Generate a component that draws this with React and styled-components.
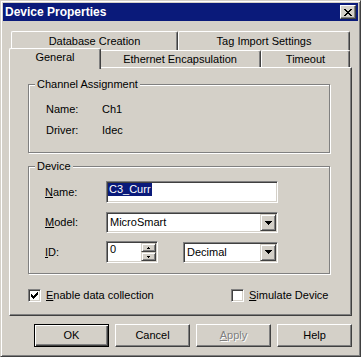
import React from 'react';
import styled, { createGlobalStyle, css } from 'styled-components';

const FACE = '#d4d0c8';
const SHADOW = '#808080';
const DARK = '#404040';
const LIGHT = '#ffffff';
const NAVY = '#0a1a7a';

const GlobalStyle = createGlobalStyle`
  html, body {
    margin: 0;
    padding: 0;
    background: ${FACE};
  }
  body {
    font-family: "Liberation Sans", Arial, sans-serif;
    font-size: 11px;
    color: #000;
  }
  * {
    box-sizing: border-box;
  }
`;

const sunken = css`
  background: ${LIGHT};
  border: 1px solid;
  border-color: ${SHADOW} ${LIGHT} ${LIGHT} ${SHADOW};
  box-shadow: inset 1px 1px 0 ${DARK}, inset -1px -1px 0 ${FACE};
`;

const raisedSoft = css`
  background: ${FACE};
  border: 1px solid;
  border-color: ${FACE} ${DARK} ${DARK} ${FACE};
  box-shadow: inset 1px 1px 0 ${LIGHT}, inset -1px -1px 0 ${SHADOW};
`;

const Window = styled.div`
  width: 361px;
  height: 357px;
  padding: 2px;
  display: flex;
  flex-direction: column;
  background: ${FACE};
  border: 1px solid;
  border-color: ${FACE} ${DARK} ${DARK} ${FACE};
  box-shadow: inset 1px 1px 0 ${LIGHT}, inset -1px -1px 0 ${SHADOW};
`;

const TitleBar = styled.div`
  height: 18px;
  display: flex;
  align-items: center;
  padding: 0 2px 0 2px;
  background: ${NAVY};
`;

const Title = styled.div`
  flex: 1;
  color: ${LIGHT};
  font-weight: bold;
  font-size: 12px;
  line-height: 14px;
`;

const CloseButton = styled.div`
  width: 16px;
  height: 14px;
  display: flex;
  align-items: center;
  justify-content: center;
  ${raisedSoft};
  border-color: ${LIGHT} ${DARK} ${DARK} ${LIGHT};
  box-shadow: inset -1px -1px 0 ${SHADOW};
`;

const Body = styled.div`
  flex: 1;
  display: flex;
  flex-direction: column;
  padding: 8px 6px 0 6px;
`;

const TabRow = styled.div`
  height: 19px;
  display: flex;
  padding: 0 2px;
`;

const Tab = styled.div`
  position: relative;
  z-index: ${(p) => (p.$active ? 2 : 1)};
  flex: none;
  width: ${(p) => p.$w}px;
  height: ${(p) => (p.$active ? 21 : p.$front ? 17 : 19)}px;
  margin: ${(p) => (p.$active ? '0 -2px' : '2px 0 0')};
  padding-bottom: ${(p) => (p.$active ? 3 : 0)}px;
  display: flex;
  align-items: center;
  justify-content: center;
  line-height: 13px;
  white-space: nowrap;
  background: ${FACE};
  border-top: 1px solid ${LIGHT};
  border-left: 1px solid ${LIGHT};
  border-right: 1px solid ${DARK};
  border-radius: 2px 2px 0 0;
  box-shadow: inset -1px 0 0 ${SHADOW};
`;

const Panel = styled.div`
  height: 249px;
  display: flex;
  flex-direction: column;
  padding: 10px 0 0 18px;
  border: 1px solid;
  border-color: ${LIGHT} ${DARK} ${DARK} ${LIGHT};
  box-shadow: inset -1px -1px 0 ${SHADOW};
`;

const GroupBox = styled.fieldset`
  width: 302px;
  margin: ${(p) => p.$gap || 0}px 0 0 0;
  padding: 0;
  min-inline-size: 0;
  border: 1px solid ${SHADOW};
  box-shadow: 1px 1px 0 ${LIGHT}, inset 1px 1px 0 ${LIGHT};
`;

const Legend = styled.legend`
  margin-left: 6px;
  padding: 0 2px;
  line-height: 13px;
  background: ${FACE};
`;

const GroupBody = styled.div`
  display: flex;
  flex-direction: column;
  gap: ${(p) => p.$gap}px;
  padding: ${(p) => p.$pad};
`;

const InfoRow = styled.div`
  display: flex;
  line-height: 13px;
`;

const InfoLabel = styled.div`
  width: 56px;
`;

const FieldRow = styled.div`
  display: flex;
  align-items: center;
  margin-top: ${(p) => p.$mt || 0}px;
`;

const FieldLabel = styled.div`
  width: 61px;
  line-height: 13px;
`;

const Key = styled.span`
  text-decoration: underline;
  text-underline-offset: 1px;
`;

const EditBox = styled.div`
  width: ${(p) => p.$w}px;
  height: 22px;
  padding: 1px 1px 1px 1px;
  line-height: 13px;
  display: flex;
  ${sunken};
`;

const Selected = styled.span`
  align-self: flex-start;
  padding: 0 1px;
  background: ${NAVY};
  color: ${LIGHT};
  white-space: pre;
`;

const EditText = styled.span`
  flex: 1;
  padding-left: 2px;
`;

const Combo = styled.div`
  width: ${(p) => p.$w}px;
  height: 21px;
  margin-left: ${(p) => p.$ml || 0}px;
  padding: 1px;
  display: flex;
  align-items: center;
  ${sunken};
`;

const ComboText = styled.span`
  flex: 1;
  padding-left: 2px;
  line-height: 13px;
`;

const DropButton = styled.div`
  width: 16px;
  align-self: stretch;
  display: flex;
  align-items: center;
  justify-content: center;
  ${raisedSoft};
`;

const SpinColumn = styled.div`
  width: 15px;
  display: flex;
  flex-direction: column;
`;

const SpinButton = styled.div`
  flex: 1;
  display: flex;
  align-items: center;
  justify-content: center;
  ${raisedSoft};
`;

const CheckRow = styled.div`
  display: grid;
  grid-template-columns: 203px auto;
  margin-top: 15px;
`;

const CheckItem = styled.label`
  display: flex;
  align-items: center;
  gap: 5px;
  line-height: 13px;
`;

const CheckBox = styled.span`
  width: 13px;
  height: 13px;
  padding: 1px;
  display: flex;
  ${sunken};
`;

const ButtonRow = styled.div`
  display: flex;
  justify-content: flex-end;
  gap: 6px;
  margin-top: 8px;
`;

const Button = styled.div`
  width: 75px;
  height: 23px;
  display: flex;
  align-items: center;
  justify-content: center;
  line-height: 13px;
  background: ${FACE};
  border: 1px solid;
  border-color: ${LIGHT} ${DARK} ${DARK} ${LIGHT};
  box-shadow: inset -1px -1px 0 ${SHADOW};
  color: ${(p) => (p.$disabled ? SHADOW : '#000')};
  text-shadow: ${(p) => (p.$disabled ? `1px 1px 0 ${LIGHT}` : 'none')};
  ${(p) =>
    p.$default &&
    css`
      border-color: #000;
      box-shadow: inset 1px 1px 0 ${LIGHT}, inset -1px -1px 0 ${DARK},
        inset -2px -2px 0 ${SHADOW};
    `}
`;

const CloseGlyph = () => (
  <svg width="8" height="7" viewBox="0 0 8 7" shapeRendering="crispEdges">
    <path
      d="M0 0h2v1h1v1h2v-1h1v-1h2v1h-1v1h-1v1h-1v1h1v1h1v1h1v1h-2v-1h-1v-1h-2v1h-1v1h-2v-1h1v-1h1v-1h1v-1h-1v-1h-1v-1h-1z"
      fill="#000"
    />
  </svg>
);

const DownArrow = () => (
  <svg width="7" height="4" viewBox="0 0 7 4" shapeRendering="crispEdges">
    <path d="M0 0h7v1h-1v1h-1v1h-1v1h-1v-1h-1v-1h-1v-1h-1z" fill="#000" />
  </svg>
);

const SpinArrow = ({ up }) => (
  <svg width="3" height="2" viewBox="0 0 3 2" shapeRendering="crispEdges">
    {up ? (
      <path d="M1 0h1v1h1v1h-3v-1h1z" fill="#000" />
    ) : (
      <path d="M0 0h3v1h-1v1h-1v-1h-1z" fill="#000" />
    )}
  </svg>
);

const CheckMark = () => (
  <svg width="9" height="9" viewBox="0 0 9 9" shapeRendering="crispEdges">
    {[
      [1, 3],
      [2, 4],
      [3, 5],
      [4, 4],
      [5, 3],
      [6, 2],
      [7, 1],
    ].map(([x, y]) => (
      <rect key={x} x={x} y={y} width="1" height="3" fill="#000" />
    ))}
  </svg>
);

function App() {
  return (
    <>
      <GlobalStyle />
      <Window>
        <TitleBar>
          <Title>Device Properties</Title>
          <CloseButton>
            <CloseGlyph />
          </CloseButton>
        </TitleBar>
        <Body>
          <TabRow>
            <Tab $w={167}>Database Creation</Tab>
            <Tab $w={172}>Tag Import Settings</Tab>
          </TabRow>
          <TabRow>
            <Tab $w={92} $active>
              General
            </Tab>
            <Tab $w={162} $front>
              Ethernet Encapsulation
            </Tab>
            <Tab $w={89} $front>
              Timeout
            </Tab>
          </TabRow>
          <Panel>
            <GroupBox>
              <Legend>Channel Assignment</Legend>
              <GroupBody $gap={8} $pad="12px 0 15px 17px">
                <InfoRow>
                  <InfoLabel>Name:</InfoLabel>
                  <span>Ch1</span>
                </InfoRow>
                <InfoRow>
                  <InfoLabel>Driver:</InfoLabel>
                  <span>Idec</span>
                </InfoRow>
              </GroupBody>
            </GroupBox>
            <GroupBox $gap={7}>
              <Legend>Device</Legend>
              <GroupBody $gap={0} $pad="8px 0 10px 16px">
                <FieldRow>
                  <FieldLabel>
                    <Key>N</Key>ame:
                  </FieldLabel>
                  <EditBox $w={172}>
                    <Selected>C3_Curr</Selected>
                  </EditBox>
                </FieldRow>
                <FieldRow $mt={9}>
                  <FieldLabel>
                    <Key>M</Key>odel:
                  </FieldLabel>
                  <Combo $w={172}>
                    <ComboText>MicroSmart</ComboText>
                    <DropButton>
                      <DownArrow />
                    </DropButton>
                  </Combo>
                </FieldRow>
                <FieldRow $mt={8}>
                  <FieldLabel>
                    <Key>I</Key>D:
                  </FieldLabel>
                  <EditBox $w={52}>
                    <EditText>0</EditText>
                    <SpinColumn>
                      <SpinButton>
                        <SpinArrow up />
                      </SpinButton>
                      <SpinButton>
                        <SpinArrow />
                      </SpinButton>
                    </SpinColumn>
                  </EditBox>
                  <Combo $w={95} $ml={25}>
                    <ComboText>Decimal</ComboText>
                    <DropButton>
                      <DownArrow />
                    </DropButton>
                  </Combo>
                </FieldRow>
              </GroupBody>
            </GroupBox>
            <CheckRow>
              <CheckItem>
                <CheckBox>
                  <CheckMark />
                </CheckBox>
                <span>
                  <Key>E</Key>nable data collection
                </span>
              </CheckItem>
              <CheckItem>
                <CheckBox />
                <span>
                  <Key>S</Key>imulate Device
                </span>
              </CheckItem>
            </CheckRow>
          </Panel>
          <ButtonRow>
            <Button $default>OK</Button>
            <Button>Cancel</Button>
            <Button $disabled>
              <Key>A</Key>pply
            </Button>
            <Button>Help</Button>
          </ButtonRow>
        </Body>
      </Window>
    </>
  );
}

export default App;
